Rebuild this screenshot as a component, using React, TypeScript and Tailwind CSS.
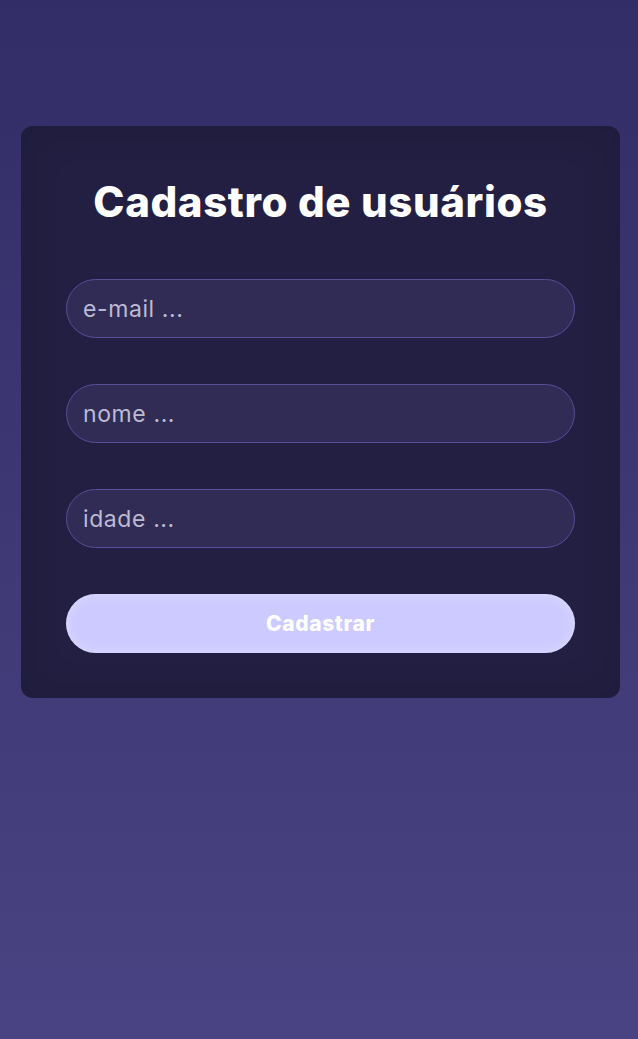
export default function App() {
  const fields = ['e-mail ...', 'nome ...', 'idade ...']

  return (
    <div className="min-h-[1039px] w-full bg-gradient-to-b from-[#322d66] to-[#4a4383] pt-[126px] pl-[21px] font-['Inter',sans-serif]">
      <form
        className="flex w-[599px] flex-col rounded-[12px] bg-[#221f42] px-[45px] pt-[45px] pb-[45px] shadow-[inset_0_0_40px_rgba(0,0,0,0.12)]"
        onSubmit={e => e.preventDefault()}
      >
        <h1 className="mb-[48px] h-[60px] text-center text-[42px] font-extrabold leading-[62px] tracking-[0.6px] text-white">
          Cadastro de usuários
        </h1>
        <div className="flex flex-col gap-[46px]">
          {fields.map(f => (
            <input
              key={f}
              placeholder={f}
              className="h-[59px] w-full rounded-full border border-[#554f9c] bg-[#312c56] px-[16px] text-[23px] tracking-[0.6px] text-[#c4c2d8] placeholder:text-[#bdbbd2] outline-none"
            />
          ))}
          <button
            type="submit"
            className="h-[59px] w-full rounded-full bg-[#cdcaff] text-[21px] font-extrabold tracking-[0.6px] text-white shadow-[inset_0_0_12px_rgba(255,255,255,0.35)]"
          >
            Cadastrar
          </button>
        </div>
      </form>
    </div>
  )
}
